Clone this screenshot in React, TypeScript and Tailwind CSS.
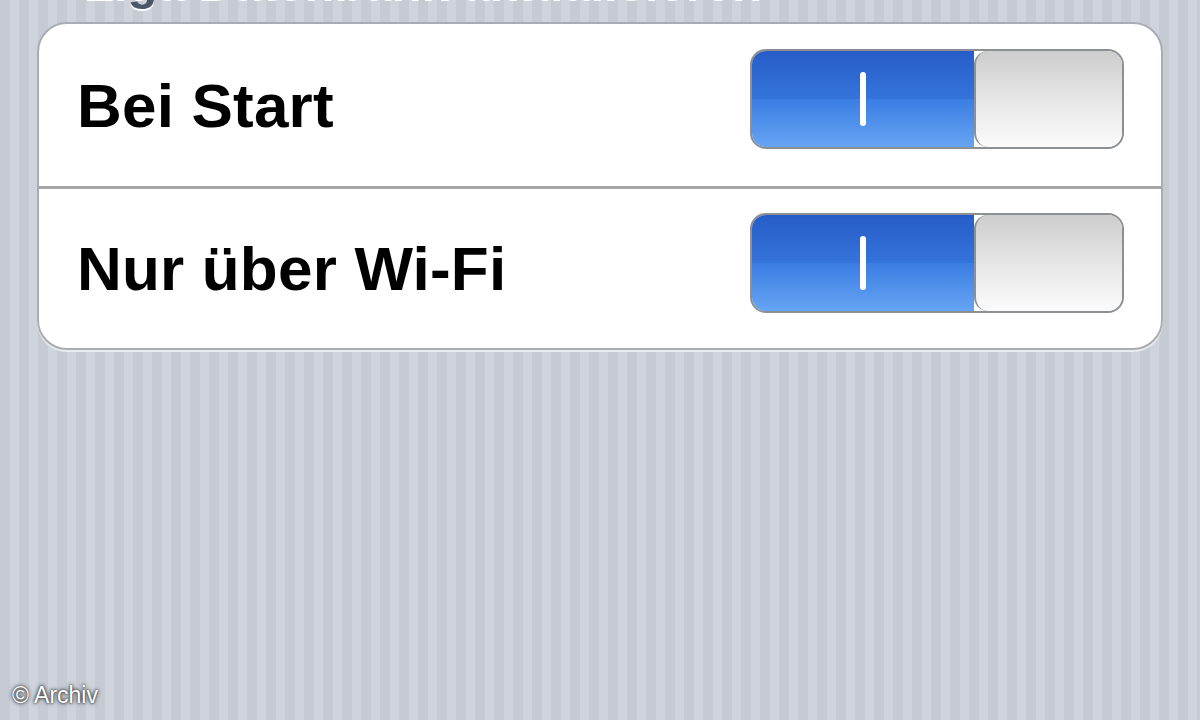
const rows = ['Bei Start', 'Nur über Wi-Fi'];

function Toggle() {
  return (
    <div className="mb-[12px] flex h-[100px] w-[374px] overflow-hidden rounded-[16px] border-2 border-[#8c8f94]">
      <div className="relative flex w-[224px] items-center justify-center rounded-l-[14px] border-y-2 border-l-2 border-[#2a55a8] bg-linear-to-b from-[#2a60cc] via-[#3a7de2] to-[#66a4f3] -my-[2px] -ml-[2px]">
        <div className="absolute inset-x-0 top-0 h-1/2 bg-[#1f4fb8]/20" />
        <div className="relative h-[54px] w-[6px] rounded-full bg-white" />
      </div>
      <div className="flex-1 rounded-[14px] border-l-2 border-[#8c8f94] bg-linear-to-b from-[#cdcdcd] via-[#e6e6e6] to-[#fbfbfb]" />
    </div>
  );
}

export default function App() {
  return (
    <div
      className="relative h-[720px] w-[1200px] overflow-hidden bg-[repeating-linear-gradient(90deg,#c5cad3_0px,#c5cad3_10px,#ced3dc_10px,#ced3dc_19px)]"
      style={{ fontFamily: '"Liberation Sans", Arial, sans-serif' }}
    >
      <div className="-mt-[46px] h-[68px] pl-[84px] text-[49px] font-bold leading-[57px] text-[#4c566b] [text-shadow:0_2px_0_#ffffff]">
        Liga Datenbank aktualisieren
      </div>

      <div className="mx-[37px] overflow-hidden rounded-[30px] border-2 border-[#a9acb2] bg-white shadow-[0_2px_0_#e9ecf0]">
        {rows.map((label, i) => (
          <div
            key={label}
            className={`flex h-[162px] items-center justify-between pl-[38px] pr-[37px] ${i > 0 ? 'border-t-[3px] border-[#a6a6a6]' : ''}`}
          >
            <span className="text-[62px] font-bold tracking-[0.2px] text-black">{label}</span>
            <Toggle />
          </div>
        ))}
      </div>

      <div className="absolute bottom-[8px] left-[12px] text-[23px] text-white [text-shadow:0_0_4px_#222,0_0_2px_#222]">
        © Archiv
      </div>
    </div>
  );
}
